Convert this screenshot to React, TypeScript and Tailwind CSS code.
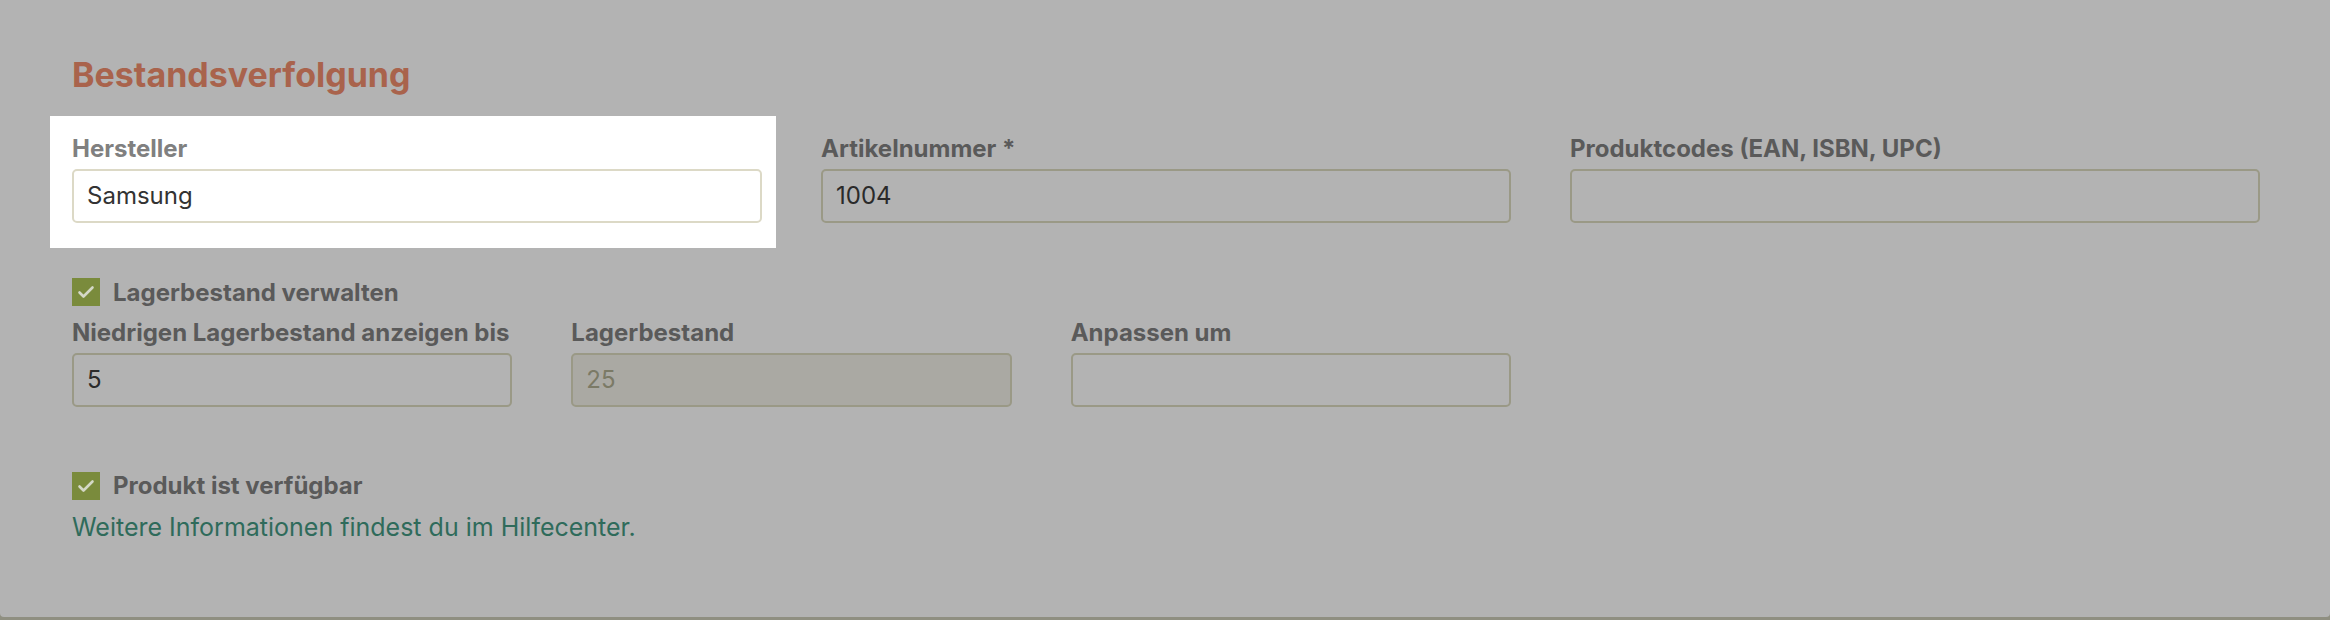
import React from "react";

const font = { fontFamily: "Inter, 'Noto Sans', sans-serif" };

function Check() {
  return (
    <div className="w-[28px] h-[28px] bg-[#7a8b3c] flex items-center justify-center shrink-0">
      <svg width="18" height="14" viewBox="0 0 18 14" fill="none">
        <path d="M2.5 7.5 L6.5 11.5 L15.5 2.5" stroke="#d4d8c6" strokeWidth="2.6" strokeLinecap="round" strokeLinejoin="round" />
      </svg>
    </div>
  );
}

const label = "text-[24px] leading-[28px] font-bold mb-[6px]";
const input = "h-[54px] border-2 rounded-[5px] flex items-center pl-[13px] text-[24px]";

export default function App() {
  return (
    <div className="w-[2330px] h-[620px] bg-[#8f8f81] overflow-hidden" style={font}>
      <div className="h-[617px] bg-[#b3b3b3] rounded-b-[4px] pl-[72px] pr-[70px] pt-[55px]">
        <h2 className="text-[34px] leading-[40px] font-bold text-[#a9634c]">Bestandsverfolgung</h2>

        <div className="mt-[21px] grid grid-cols-3 gap-x-[59px]">
          <div className="bg-white -ml-[22px] pl-[22px] -mr-[14px] pr-[14px] pt-[19px] pb-[25px]">
            <div className={`${label} text-[#808080]`}>Hersteller</div>
            <div className={`${input} border-[#dcd9c6] text-[#333333]`}>Samsung</div>
          </div>
          <div className="pt-[19px] pb-[25px]">
            <div className={`${label} text-[#5a5a5a]`}>Artikelnummer *</div>
            <div className={`${input} border-[#9a9986] text-[#2a2a2a]`}>1004</div>
          </div>
          <div className="pt-[19px] pb-[25px]">
            <div className={`${label} text-[#5a5a5a]`}>Produktcodes (EAN, ISBN, UPC)</div>
            <div className={`${input} border-[#9a9986]`} />
          </div>
        </div>

        <div className="mt-[30px] flex items-start gap-[13px]">
          <Check />
          <span className="mt-[1px] text-[24px] leading-[28px] font-bold text-[#5a5a5a]">Lagerbestand verwalten</span>
        </div>

        <div className="mt-[12px] grid grid-cols-3 gap-x-[59px] w-[1439px]">
          <div>
            <div className={`${label} text-[#5a5a5a]`}>Niedrigen Lagerbestand anzeigen bis</div>
            <div className={`${input} border-[#9a9986] text-[#2a2a2a]`}>5</div>
          </div>
          <div>
            <div className={`${label} text-[#5a5a5a]`}>Lagerbestand</div>
            <div className={`${input} border-[#9a9986] bg-[#aaa9a3] text-[#7b7a66]`}>25</div>
          </div>
          <div>
            <div className={`${label} text-[#5a5a5a]`}>Anpassen um</div>
            <div className={`${input} border-[#9a9986]`} />
          </div>
        </div>

        <div className="mt-[65px] flex items-start gap-[13px]">
          <Check />
          <span className="text-[24px] leading-[28px] font-bold text-[#5a5a5a]">Produkt ist verfügbar</span>
        </div>

        <div className="mt-[12px] text-[25px] leading-[30px] text-[#2f6b5b]">
          Weitere Informationen findest du im Hilfecenter.
        </div>
      </div>
    </div>
  );
}
